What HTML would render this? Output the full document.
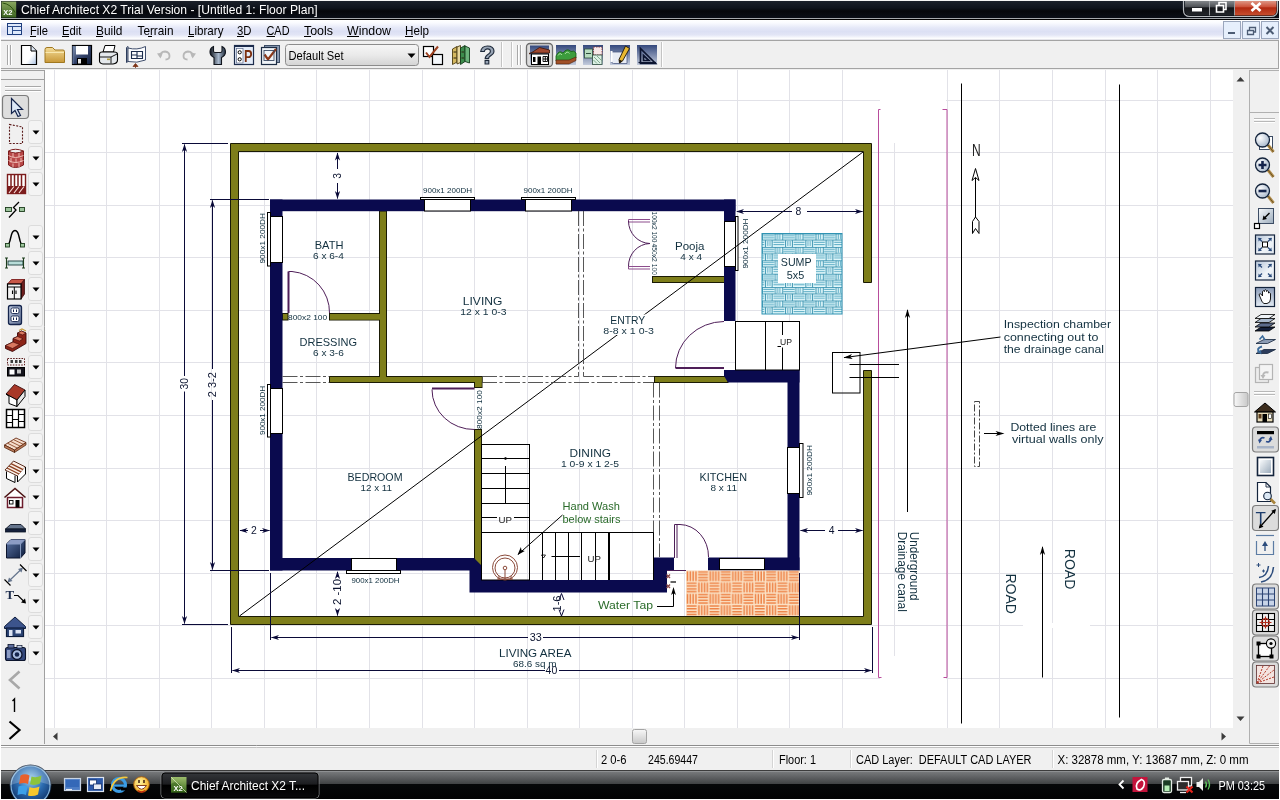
<!DOCTYPE html>
<html lang="en">
<head>
<meta charset="utf-8">
<title>Chief Architect X2 Trial Version - [Untitled 1: Floor Plan]</title>
<style>
*{box-sizing:border-box;margin:0;padding:0}
html,body{width:1280px;height:800px;overflow:hidden;background:#f0f0f0;font-family:"Liberation Sans",sans-serif;font-size:12px;color:#000}
.abs{position:absolute}
#titlebar{left:0;top:0;width:1280px;height:20px;background:linear-gradient(#1c222c 0,#0e131c 40%,#05070b 55%,#0a0e16 88%,#0a0e16 89%,#a4a8ac 90%,#a4a8ac 95%,#000 95%,#000 100%)}
#frame{left:0;top:0;width:1280px;height:800px;border:1px solid #fff;border-top-color:#f4f4f4;z-index:50;pointer-events:none}
#titlebar .t{left:21px;top:2px;color:#fff;font-size:12.5px;white-space:nowrap;letter-spacing:0}
#menubar{left:0;top:20px;width:1280px;height:20px;background:linear-gradient(#fff 0,#fafbff 15%,#e6e9f8 40%,#dce0f4 60%,#e2e5f6 78%,#f6f7fc 92%,#fff 100%);border-bottom:1px solid #e4e4ea}
#menubar span{position:absolute;top:3px;font-size:12.5px;white-space:nowrap;color:#000}
#menubar u{text-decoration:underline}
#toolbar{left:0;top:41px;width:1280px;height:28px;background:#f0f0f0}
#lefttb{left:0;top:70px;width:45px;height:675px;background:#f0f0f0}
#righttb{left:1250px;top:70px;width:30px;height:675px;background:#f0f0f0}
#canvas{left:45px;top:70px;width:1188px;height:658px;background:#fff;overflow:hidden}
#vscroll{left:1233px;top:70px;width:17px;height:658px;background:#f0f0f0}
#hscroll{left:45px;top:728px;width:1205px;height:17px;background:#f0f0f0}
#status{left:0;top:745px;width:1280px;height:25px;background:#f0f0f0}
#status span{position:absolute;top:7px;font-size:12.5px;white-space:nowrap}
#taskbar{left:0;top:770px;width:1280px;height:30px;background:linear-gradient(#3c3c3c 0,#3c3c3c 1px,#8e9092 1px,#8e9092 2px,#76787a 2px,#3e4042 14.5px,#060709 14.5px,#020203 29px,#fff 29px)}
svg{will-change:transform}
svg text{font-family:"Liberation Sans",sans-serif}
</style>
</head>
<body>
<div id="titlebar" class="abs"><svg class="abs" style="left:0;top:0" width="1280" height="20" viewBox="0 0 1280 20">
<defs><linearGradient id="gx" x1="0" y1="0" x2="0" y2="1"><stop offset="0" stop-color="#8aa860"/><stop offset="1" stop-color="#3c6420"/></linearGradient>
<linearGradient id="gb" x1="0" y1="0" x2="0" y2="1"><stop offset="0" stop-color="#8c9094"/><stop offset=".45" stop-color="#4c4f54"/><stop offset=".5" stop-color="#14161a"/><stop offset="1" stop-color="#23262b"/></linearGradient>
<linearGradient id="gr" x1="0" y1="0" x2="0" y2="1"><stop offset="0" stop-color="#e0a090"/><stop offset=".45" stop-color="#cc5038"/><stop offset=".5" stop-color="#b02810"/><stop offset="1" stop-color="#c85030"/></linearGradient></defs>
<rect x="1.500" y="1.500" width="14.700" height="16" fill="url(#gx)"/><path d="M2.500 3Q11 4 15 12.500" fill="none" stroke="#2c5010" stroke-width="1"/>
<text x="3.300" y="14.800" font-family="Liberation Sans, sans-serif" font-size="7.500" font-weight="bold" fill="#fff">X2</text>
<path d="M1183.500 0V10Q1183.500 16.500 1190 16.500H1271Q1277.500 16.500 1277.500 10V0" fill="none" stroke="#b8bcc0" stroke-width="1.200"/>
<path d="M1185 0H1209V15.500H1190Q1185 15.500 1185 10Z" fill="url(#gb)"/>
<rect x="1210" y="0" width="24" height="15.500" fill="url(#gb)"/>
<path d="M1235 0H1276.500V10Q1276.500 15.500 1271 15.500H1235Z" fill="url(#gr)"/>
<path d="M1209.500 0V15.500M1234.500 0V15.500" stroke="#9a9ea2" stroke-width="1"/>
<rect x="1192" y="8" width="10" height="3.500" fill="#fff"/>
<path d="M1216.500 5.500H1223.500V12H1216.500Z M1219 5V2.500H1226V9.500H1224" fill="none" stroke="#fff" stroke-width="1.600"/>
<path d="M1251.500 3L1260.500 11M1260.500 3L1251.500 11" stroke="#fff" stroke-width="2.800" fill="none"/>
</svg>
<svg class="abs" style="left:0;top:0" width="400" height="20"><text x="21" y="14.2" font-size="12.6" fill="#fff" textLength="296.5" lengthAdjust="spacingAndGlyphs" style="font-family:'Liberation Sans',sans-serif">Chief Architect X2 Trial Version - [Untitled 1: Floor Plan]</text></svg></div>
<div id="menubar" class="abs"><svg class="abs" style="left:0;top:0" width="1280" height="20" viewBox="0 20 1280 20" font-family="Liberation Sans, sans-serif" font-size="13" fill="#000">
<g fill="none" stroke="#1c3c7c" stroke-width="1"><rect x="7.5" y="23.5" width="14" height="11" fill="#dfeafc"/><path d="M7.500 26.500H21.500M12.500 26.500V34.500M12.500 30.500H21.500" stroke="#2c4c8c"/></g>
<text x="30" y="34.500" textLength="18" lengthAdjust="spacingAndGlyphs">File</text>
<text x="62" y="34.500" textLength="19.500" lengthAdjust="spacingAndGlyphs">Edit</text>
<text x="96" y="34.500" textLength="26.500" lengthAdjust="spacingAndGlyphs">Build</text>
<text x="137.500" y="34.500" textLength="36" lengthAdjust="spacingAndGlyphs">Terrain</text>
<text x="188" y="34.500" textLength="35.500" lengthAdjust="spacingAndGlyphs">Library</text>
<text x="237" y="34.500" textLength="14.500" lengthAdjust="spacingAndGlyphs">3D</text>
<text x="266.500" y="34.500" textLength="23" lengthAdjust="spacingAndGlyphs">CAD</text>
<text x="304" y="34.500" textLength="29" lengthAdjust="spacingAndGlyphs">Tools</text>
<text x="347" y="34.500" textLength="44" lengthAdjust="spacingAndGlyphs">Window</text>
<text x="405" y="34.500" textLength="24" lengthAdjust="spacingAndGlyphs">Help</text>
<path d="M30 36.500H36M62 36.500H69M96 36.500H103M148 36.500H152M188 36.500H194M237 36.500H244M266.500 36.500H275M304 36.500H311M347 36.500H359M405 36.500H413" stroke="#000" stroke-width="1" fill="none"/>
<g fill="#e6effc" stroke="#9aa6bc" stroke-width="1"><rect x="1223.500" y="21.500" width="17" height="17"/><rect x="1242.500" y="21.500" width="17" height="17"/><rect x="1261.500" y="21.500" width="17" height="17"/></g>
<g fill="none" stroke="#4c5c74" stroke-width="1.600"><path d="M1228 33H1235" stroke-width="2"/><path d="M1247.500 30.500H1253.500V34.500H1247.500Z M1249.500 30V27.500H1255.500V32H1254" stroke-width="1.300"/><path d="M1266.500 27L1273.500 34M1273.500 27L1266.500 34" stroke-width="2"/></g>
</svg>
</div>
<div id="toolbar" class="abs"><svg class="abs" style="left:0;top:-1px" width="1280" height="30" viewBox="0 40 1280 30" font-family="Liberation Sans, sans-serif">
<defs>
<linearGradient id="tg1" x1="0" y1="0" x2="0" y2="1"><stop offset="0" stop-color="#34487c"/><stop offset="1" stop-color="#c4ccdc"/></linearGradient>
<linearGradient id="tfold" x1="0" y1="0" x2="0" y2="1"><stop offset="0" stop-color="#f4dc98"/><stop offset="1" stop-color="#c89838"/></linearGradient>
<linearGradient id="tdoc" x1="0" y1="0" x2="1" y2="1"><stop offset="0" stop-color="#fff"/><stop offset=".6" stop-color="#fff"/><stop offset="1" stop-color="#a8c0e0"/></linearGradient>
<linearGradient id="tdd" x1="0" y1="0" x2="0" y2="1"><stop offset="0" stop-color="#f6f6f6"/><stop offset=".5" stop-color="#eaeaea"/><stop offset="1" stop-color="#d4d4d4"/></linearGradient>
<linearGradient id="tflop" x1="0" y1="0" x2="1" y2="1"><stop offset="0" stop-color="#8c9cb4"/><stop offset=".5" stop-color="#34446c"/><stop offset="1" stop-color="#14203c"/></linearGradient><linearGradient id="tmet" x1="0" y1="0" x2="1" y2="0"><stop offset="0" stop-color="#10141c"/><stop offset=".55" stop-color="#a8b8cc"/><stop offset="1" stop-color="#1c2838"/></linearGradient>
</defs>
<rect x="0.500" y="40.500" width="1278" height="28" fill="#f0f0f0" stroke="#a4a4a4"/>
<path d="M7.500 45V65M10.500 45V65" stroke="#a8a8a8" stroke-width="1" fill="none"/><path d="M8.500 45V65M11.500 45V65" stroke="#fff" stroke-width="1" fill="none"/>
<!-- new -->
<path d="M21.500 45.500H31L36.500 51V64.500H21.500Z" fill="url(#tdoc)" stroke="#000" stroke-width="1.200"/><path d="M31 45.500V51H36.500" fill="#dfe8f4" stroke="#000" stroke-width="1"/>
<!-- open -->
<path d="M45 49.500Q45 47.500 47 47.500H52.500L55 50H63Q64.500 50 64.500 51.500V62.500H45Z" fill="url(#tfold)" stroke="#a07820" stroke-width="1"/><path d="M45.500 52.500H64" stroke="#f8e8b0" stroke-width="1"/>
<!-- save -->
<rect x="72.500" y="45.500" width="19" height="19" fill="url(#tflop)" stroke="#000" stroke-width="1.200"/><rect x="76" y="46" width="12" height="8.500" fill="#fff"/><rect x="77" y="58" width="10" height="6.500" fill="#000"/><rect x="78" y="59" width="3" height="4.500" fill="#e8e8e8"/><path d="M73 46V64" stroke="#6c84b4" stroke-width="1"/>
<!-- print -->
<path d="M103 52L105 45.500H115L113.500 52Z" fill="#fff" stroke="#000" stroke-width="1"/><path d="M99.500 54Q99.500 52 102 52H114Q117.500 52 117.500 54V60Q117.500 63.500 113 64H103Q99.500 63.500 99.500 61Z" fill="#e4e8ec" stroke="#000" stroke-width="1.100"/><path d="M100 57H111V63.500M111 57L117 54" fill="none" stroke="#000" stroke-width=".9"/><rect x="107" y="58.500" width="3" height="1.600" fill="#b09c40"/>
<!-- plan -->
<path d="M126.500 47.500L128 46.500V61.500L126.500 62.500Z" fill="#fff" stroke="#2c3c5c"/><path d="M128 48Q137 50.500 145.500 46.500V60Q137 63.500 128 61.500Z" fill="#fbfcfe" stroke="#2c3c5c" stroke-width=".9"/><path d="M131.500 51.500H142.500V58.500H131.500ZM131.500 55H137M137 51.500V58.500M137 56H142.500" fill="none" stroke="#1c2c4c" stroke-width="1.100"/><path d="M135.500 63.500L133 66.500H138Z M135.500 66V68" fill="#7c3418" stroke="#7c3418" stroke-width=".8"/>
<!-- undo redo -->
<path d="M160.500 56.500Q160 51.500 165 51.500Q169.500 52 169.500 56Q169.500 59.500 165.500 59.500" fill="none" stroke="#b8b8b8" stroke-width="1.800"/><path d="M157 53.500L163 52.500L160.500 58.500Z" fill="#b8b8b8"/>
<path d="M192.500 56.500Q193 51.500 188 51.500Q183.500 52 183.500 56Q183.500 59.500 187.500 59.500" fill="none" stroke="#b8b8b8" stroke-width="1.800"/><path d="M196 53.500L190 52.500L192.500 58.500Z" fill="#b8b8b8"/>
<!-- wrench -->
<path d="M213.500 46.500V51Q213.500 52.500 215 52.500H220.500Q222 52.500 222 51V46.500Q225.500 48 225.500 52Q225.500 55.500 221.500 57.500V64.500H214V57.500Q210 55.500 210 52Q210 48 213.500 46.500Z" fill="url(#tmet)" stroke="#10141c" stroke-width="1.100"/>
<!-- P -->
<rect x="234.500" y="45.500" width="19" height="19" fill="#e4ecf8" stroke="#1c2c4c" stroke-width="1.200"/><path d="M235 46.200H253" stroke="#1c2c4c" stroke-width="1.600"/><rect x="236.500" y="48.500" width="6.500" height="14.500" fill="#fff" stroke="#5c6c8c" stroke-width=".7"/><circle cx="239.700" cy="52.300" r="1.600" fill="none" stroke="#000" stroke-width="1"/><circle cx="239.700" cy="59.300" r="1.600" fill="none" stroke="#000" stroke-width="1"/><text x="244" y="61.700" font-size="17" font-weight="bold" fill="#7c3010" textLength="8.500" lengthAdjust="spacingAndGlyphs">P</text>
<!-- checkbox -->
<rect x="264.500" y="45.500" width="15" height="17" fill="#8c9cb4" stroke="#3c4c64"/><rect x="261.500" y="47.500" width="15" height="17" fill="#f0f4f8" stroke="#1c2c44" stroke-width="1.200"/><path d="M264.500 54.500L268 59.500L276 49" fill="none" stroke="#8c3818" stroke-width="2.200"/><rect x="264" y="50.500" width="10" height="10" fill="none" stroke="#3c4c64" stroke-width=".9"/>
<!-- dropdown -->
<rect x="285.500" y="44.500" width="133" height="21" rx="3" fill="url(#tdd)" stroke="#8c8c8c"/><text x="288.500" y="59.500" font-size="12.500" fill="#000" textLength="55" lengthAdjust="spacingAndGlyphs">Default Set</text><path d="M407.500 53.500H415.500L411.500 58Z" fill="#000"/>
<!-- checks -->
<rect x="423.500" y="46.500" width="10" height="10" fill="#fff" stroke="#000" stroke-width="1.200"/><rect x="432.500" y="54.500" width="10" height="10" fill="#f4f8fc" stroke="#000" stroke-width="1.200"/><path d="M426 52.500L429.500 57L438 46.500" fill="none" stroke="#9c4020" stroke-width="2"/>
<!-- books -->
<path d="M452.500 49L457 46.500V62L452.500 64.500Z" fill="#d4b860" stroke="#4c3c10" stroke-width=".9"/><path d="M457 47L460.500 45.500V62.500L457 64Z" fill="#e8d8a0" stroke="#4c3c10" stroke-width=".9"/><path d="M460.500 48L465 45.500V61.500L460.500 64.500Z" fill="#3c8c4c" stroke="#143c1c" stroke-width=".9"/><path d="M465 46L469.500 48V63L465 61.500Z" fill="#6cb47c" stroke="#143c1c" stroke-width=".9"/><path d="M453.500 52H456.500M453.500 58H456.500M461.500 52H464M461.500 58H464" stroke="#2c2410" stroke-width="1.200"/>
<!-- help -->
<text x="479.500" y="64" font-size="25" font-weight="bold" fill="#98a4b4" stroke="#1c2838" stroke-width="1.100" textLength="16" lengthAdjust="spacingAndGlyphs">?</text>
<path d="M501.500 42V67M511.500 42V67M661.500 42V67" stroke="#c4c4c4" stroke-width="1" fill="none"/><path d="M502.500 42V67M512.500 42V67M662.500 42V67" stroke="#fff" stroke-width="1" fill="none"/>
<path d="M517.500 45V65M520.500 45V65" stroke="#a8a8a8" stroke-width="1" fill="none"/><path d="M518.500 45V65M521.500 45V65" stroke="#fff" stroke-width="1" fill="none"/>
<!-- house (selected) -->
<rect x="526.500" y="43.500" width="26" height="23" rx="3.500" fill="#dcdcdc" stroke="#6c6c6c" stroke-width="1.300"/>
<rect x="530" y="45.500" width="19" height="19" fill="url(#tg1)"/><path d="M529.500 54L539.500 47.500L549.500 50V53H529.500Z" fill="#a04830" stroke="#3c1408" stroke-width=".8"/><rect x="531.500" y="54" width="17" height="10.500" fill="#fff" stroke="#000" stroke-width="1"/><rect x="537.500" y="56.500" width="3.500" height="8" fill="#000"/><rect x="533" y="57" width="2.500" height="5" fill="#000"/><path d="M543 56.500H547.500V61.500H543ZM545.300 56.500V61.500M543 59H547.500" fill="none" stroke="#000" stroke-width=".9"/>
<!-- terrain -->
<rect x="556" y="45" width="20" height="20" fill="url(#tg1)"/><path d="M556 56Q559 49.500 563 53Q567 47.500 571 51.500Q574 50 576 53V58L570 61H556Z" fill="#3c9c3c" stroke="#145c14" stroke-width=".8"/><path d="M556 60H569L576 57V60.500L569 64H556Z" fill="#a05028" stroke="#4c2008" stroke-width=".6"/><path d="M558 55.500Q560 52 562 55M565 54Q567 50.500 569.500 53.500" stroke="#a8e0a0" stroke-width="1" fill="none"/>
<!-- plan -->
<rect x="583" y="45" width="20" height="20" fill="url(#tg1)"/><rect x="584.500" y="49" width="8" height="9" fill="#b8dcc0" stroke="#2c4c3c" stroke-width=".8"/><rect x="593.500" y="47" width="8.500" height="8" fill="#f8e8e8" stroke="#7c2c2c" stroke-width=".8" stroke-dasharray="1.500 1"/><rect x="592.500" y="55" width="9.500" height="9.500" fill="#dcf0e4" stroke="#2c4c3c" stroke-width=".8"/><path d="M594 57L600 63M597 56L601.500 60.500M593.500 60L597 63.500" stroke="#5c8c6c" stroke-width=".7"/><path d="M586 53.500H591" stroke="#2c4c3c" stroke-width="1"/>
<!-- pencil -->
<rect x="610" y="45" width="20" height="20" fill="url(#tg1)"/><path d="M611.500 52H627V63.500H613.500Q611.500 63.500 611.500 61Z" fill="#e8ecf4" stroke="#4c5c84" stroke-width=".8"/><path d="M611.500 51V62" stroke="#fff" stroke-width="2"/><path d="M625.500 46L629.500 48.500L622.500 61L619.500 63L619 59.500Z" fill="#e8b830" stroke="#1c1408" stroke-width=".9"/><path d="M619 59.500L622.500 61L619.500 63Z" fill="#1c1408"/>
<!-- triangle -->
<rect x="637" y="45" width="20" height="20" fill="url(#tg1)"/><path d="M640.500 48.500V63.500H655.500Z M643.500 55.500V60.500H649Z" fill="none" stroke="#0c1430" stroke-width="1.700"/><path d="M638.500 62.500H656" stroke="#0c1430" stroke-width="1.200"/>
</svg>
</div>
<div id="lefttb" class="abs"><svg class="abs" style="left:0;top:0" width="45" height="675" viewBox="0 70 45 675" font-family="Liberation Sans, sans-serif">
<defs><linearGradient id="lb" x1="0" y1="0" x2="1" y2="1"><stop offset="0" stop-color="#5c74a4"/><stop offset="1" stop-color="#0c1c3c"/></linearGradient><linearGradient id="lo" x1="0" y1="0" x2="1" y2="1"><stop offset="0" stop-color="#c4d0e4"/><stop offset="1" stop-color="#5c6c90"/></linearGradient></defs>
<path d="M0 70.500H45M44.500 70V745M0.500 70V745M0 79.500H45" stroke="#a0a0a0" fill="none"/>
<path d="M5 86.500H41M5 90.500H41" stroke="#a8a8a8" fill="none"/><path d="M5 87.500H41M5 91.500H41" stroke="#fff" fill="none"/>
<rect x="28.500" y="120.5" width="14" height="23" rx="2.500" fill="#f4f4f4" stroke="#dcdcdc"/><path d="M32.500 130.5H39.500L36 134.5Z" fill="#000"/>
<rect x="28.500" y="146.5" width="14" height="23" rx="2.500" fill="#f4f4f4" stroke="#dcdcdc"/><path d="M32.500 156.5H39.500L36 160.5Z" fill="#000"/>
<rect x="28.500" y="172.5" width="14" height="23" rx="2.500" fill="#f4f4f4" stroke="#dcdcdc"/><path d="M32.500 182.5H39.500L36 186.5Z" fill="#000"/>
<rect x="28.500" y="225.5" width="14" height="23" rx="2.500" fill="#f4f4f4" stroke="#dcdcdc"/><path d="M32.500 235.5H39.500L36 239.5Z" fill="#000"/>
<rect x="28.500" y="251.5" width="14" height="23" rx="2.500" fill="#f4f4f4" stroke="#dcdcdc"/><path d="M32.500 261.5H39.500L36 265.5Z" fill="#000"/>
<rect x="28.500" y="277.5" width="14" height="23" rx="2.500" fill="#f4f4f4" stroke="#dcdcdc"/><path d="M32.500 287.5H39.500L36 291.5Z" fill="#000"/>
<rect x="28.500" y="303.5" width="14" height="23" rx="2.500" fill="#f4f4f4" stroke="#dcdcdc"/><path d="M32.500 313.5H39.500L36 317.5Z" fill="#000"/>
<rect x="28.500" y="329.5" width="14" height="23" rx="2.500" fill="#f4f4f4" stroke="#dcdcdc"/><path d="M32.500 339.5H39.500L36 343.5Z" fill="#000"/>
<rect x="28.500" y="355.5" width="14" height="23" rx="2.500" fill="#f4f4f4" stroke="#dcdcdc"/><path d="M32.500 365.5H39.500L36 369.5Z" fill="#000"/>
<rect x="28.500" y="381.5" width="14" height="23" rx="2.500" fill="#f4f4f4" stroke="#dcdcdc"/><path d="M32.500 391.5H39.500L36 395.5Z" fill="#000"/>
<rect x="28.500" y="407.5" width="14" height="23" rx="2.500" fill="#f4f4f4" stroke="#dcdcdc"/><path d="M32.500 417.5H39.500L36 421.5Z" fill="#000"/>
<rect x="28.500" y="433.5" width="14" height="23" rx="2.500" fill="#f4f4f4" stroke="#dcdcdc"/><path d="M32.500 443.5H39.500L36 447.5Z" fill="#000"/>
<rect x="28.500" y="459.5" width="14" height="23" rx="2.500" fill="#f4f4f4" stroke="#dcdcdc"/><path d="M32.500 469.5H39.500L36 473.5Z" fill="#000"/>
<rect x="28.500" y="485.5" width="14" height="23" rx="2.500" fill="#f4f4f4" stroke="#dcdcdc"/><path d="M32.500 495.5H39.500L36 499.5Z" fill="#000"/>
<rect x="28.500" y="511.5" width="14" height="23" rx="2.500" fill="#f4f4f4" stroke="#dcdcdc"/><path d="M32.500 521.5H39.500L36 525.5Z" fill="#000"/>
<rect x="28.500" y="537.5" width="14" height="23" rx="2.500" fill="#f4f4f4" stroke="#dcdcdc"/><path d="M32.500 547.5H39.500L36 551.5Z" fill="#000"/>
<rect x="28.500" y="563.5" width="14" height="23" rx="2.500" fill="#f4f4f4" stroke="#dcdcdc"/><path d="M32.500 573.5H39.500L36 577.5Z" fill="#000"/>
<rect x="28.500" y="589.5" width="14" height="23" rx="2.500" fill="#f4f4f4" stroke="#dcdcdc"/><path d="M32.500 599.5H39.500L36 603.5Z" fill="#000"/>
<rect x="28.500" y="615.5" width="14" height="23" rx="2.500" fill="#f4f4f4" stroke="#dcdcdc"/><path d="M32.500 625.5H39.500L36 629.5Z" fill="#000"/>
<rect x="28.500" y="641.5" width="14" height="23" rx="2.500" fill="#f4f4f4" stroke="#dcdcdc"/><path d="M32.500 651.5H39.500L36 655.5Z" fill="#000"/>
<rect x="2.500" y="95.500" width="26" height="23" rx="3.500" fill="#dedede" stroke="#7c7c7c" stroke-width="1.200"/><path d="M11.500 98.500V113.500L15 110.500L18 116.500L20.500 115.500L17.500 109.500H22.500Z" fill="#dce8f8" stroke="#14244c" stroke-width="1.200"/>
<path d="M9.500 124.500L22.500 127V143.500H9.500Z" fill="none" stroke="#5c1c1c" stroke-width="1.100" stroke-dasharray="2 1.400"/>
<path d="M8.500 151Q15 155 23.500 151V165Q15 170 8.500 165Z" fill="#b84848" stroke="#7c1c1c" stroke-width="1"/><path d="M8.500 155.500Q15 159.500 23.500 155.500M8.500 160.500Q15 164.500 23.500 160.500M13 153V157M19 153V157M11 158V162.500M16 158.500V163M21 158V162M13 163.500V167M19 163V167" stroke="#f4c8c0" stroke-width=".9" fill="none"/><path d="M8.500 151Q15 147.500 23.500 151" stroke="#7c1c1c" fill="none"/>
<rect x="7.500" y="174.500" width="18" height="19" fill="#fff" stroke="#7c1c1c" stroke-width="1.400"/><path d="M11 175V186M14.500 175V186M18 175V186M21.500 175V186" stroke="#7c1c1c" stroke-width="1.500"/><rect x="7.500" y="186" width="18" height="7.500" fill="#7c1c1c"/><path d="M9 193L14 186.500M14 193L19 186.500M19 193L24 186.500" stroke="#f8dcd8" stroke-width="1.200"/>
<rect x="5.500" y="207.500" width="6" height="4" fill="#9cc49c" stroke="#1c3c1c" stroke-width=".9"/><rect x="19.500" y="207.500" width="5" height="4" fill="#9cc49c" stroke="#1c3c1c" stroke-width=".9"/><path d="M9 217.500L16 210L13.500 207.500L19 202" fill="none" stroke="#000" stroke-width="1.300"/>
<path d="M7.500 244.500C11.500 244.500 9.500 230.500 15 230.500C20.500 230.500 18.500 244.500 22.500 244.500" fill="none" stroke="#000" stroke-width="1.500"/><rect x="5.500" y="243.500" width="4" height="3.500" fill="#9cc49c" stroke="#1c3c1c" stroke-width=".9"/><rect x="20.500" y="243.500" width="4" height="3.500" fill="#9cc49c" stroke="#1c3c1c" stroke-width=".9"/>
<rect x="8" y="261" width="15" height="4" fill="#b8dcd8" stroke="#1c3c3c" stroke-width=".9"/><path d="M6.500 258V268M23.500 258V268M5 258H8M5 268H8M22 258H25M22 268H25" stroke="#1c3c1c" stroke-width="1.100" fill="none"/>
<path d="M7.500 284L11.500 279.500H24.500L21 284Z" fill="#c85848" stroke="#7c1c1c" stroke-width=".9"/><path d="M21 284L24.500 279.500V294L21 299Z" fill="#6c1c1c" stroke="#3c0c0c" stroke-width=".8"/><rect x="7.500" y="284" width="13.500" height="15" fill="#f4f4f4" stroke="#000" stroke-width="1.200"/><path d="M14.300 287V299M7.500 287H21" stroke="#000" stroke-width="1"/><path d="M12.500 290.500V294M16 290.500V294" stroke="#000" stroke-width="1.100"/>
<rect x="8.500" y="305.500" width="13" height="19" rx="2" fill="url(#lo)" stroke="#14244c" stroke-width="1.300"/><rect x="11" y="308" width="8" height="5.500" rx="1.500" fill="#fff" stroke="#14244c" stroke-width=".9"/><rect x="11" y="316" width="8" height="5.500" rx="1.500" fill="#fff" stroke="#14244c" stroke-width=".9"/><path d="M13.500 309.500V312M16.500 309.500V312M13.500 317.500V320M16.500 317.500V320" stroke="#14244c" stroke-width="1"/>
<path d="M5.500 345.500L13 342V338.500L17.500 336.500V333L21.500 331L26 333V343.500L12.500 351.500L5.500 348.500Z" fill="#8c2418" stroke="#3c0808" stroke-width=".9"/><path d="M5.500 345.500L13 342L19.500 344.500L12.500 348.500ZM13 338.500L17.500 336.500L23 338.800L19.500 341ZM17.500 333L21.500 331L26 333L22.500 335Z" fill="#d87860" stroke="#3c0808" stroke-width=".6"/><path d="M19 330.500L22 329L26 331" stroke="#c8a040" stroke-width="1.300" fill="none"/>
<rect x="7.500" y="358.500" width="17" height="6.500" fill="none" stroke="#5c1c1c" stroke-width="1" stroke-dasharray="1.600 1.200"/><rect x="10.500" y="360" width="2.500" height="3" fill="#3c3c3c"/><rect x="15" y="360" width="2.500" height="3" fill="#3c3c3c"/><rect x="19" y="360" width="2.500" height="3" fill="#3c3c3c"/><rect x="7.500" y="367.500" width="17" height="8.500" fill="#14141c" stroke="#000"/><rect x="9.500" y="369.500" width="5" height="5" fill="#fff"/><rect x="17" y="369.500" width="4" height="4" fill="#c8c8c8"/>
<path d="M6 394L14.500 384.500L25 390L17 400Z" fill="#a83828" stroke="#3c0c0c" stroke-width=".9"/><path d="M6 394L9 396V403.500L17 406.500V400Z" fill="#fff" stroke="#000" stroke-width="1"/><path d="M17 400L25 390V396.500L17 406.500Z" fill="#e8e8e8" stroke="#000" stroke-width="1"/>
<rect x="6.500" y="409.500" width="18" height="18" fill="#fff" stroke="#000" stroke-width="1.500"/><path d="M12.500 409.500V427.500M18.500 409.500V427.500M6.500 415.500H12.500M12.500 419.500H18.500M18.500 414.500H24.500M18.500 421.500H24.500M6.500 422.500H12.500" stroke="#000" stroke-width="1.200" fill="none"/>
<path d="M4.500 445L16 438L26 442.500L14.500 450Z" fill="#f4dccc" stroke="#6c3018" stroke-width=".9"/><path d="M4.500 445V447.500L14.500 452.500V450ZM14.500 450V452.500L26 445V442.500Z" fill="#b87858" stroke="#4c2008" stroke-width=".7"/><path d="M7.500 443.200L17.500 448.200M10.500 441.400L20.500 446.300M13.500 439.600L23.300 444.300" stroke="#8c4828" stroke-width=".9"/>
<path d="M5 470L13.500 461L25.500 467L17.500 476Z" fill="#fbeee6" stroke="#4c1c0c" stroke-width=".9"/><path d="M7 468L19 474M9 465.800L21 471.800M11 463.600L23 469.600" stroke="#8c4020" stroke-width="1.300"/><path d="M6.500 471.500V478.500L15 482.500V475.500M17.500 476V482L25.500 474V467" fill="#fff" stroke="#000" stroke-width="1"/>
<path d="M4.500 497.500L15 488.500L25.500 497.500" fill="#fff" stroke="#4c1414" stroke-width="1.600"/><path d="M7 497H23" stroke="#fff" stroke-width="2"/><rect x="7.500" y="497.500" width="15" height="10" fill="#fff" stroke="#6c1c2c" stroke-width="1.500"/><rect x="15.500" y="500" width="4" height="7.500" fill="#000"/><rect x="9.500" y="500.500" width="3.500" height="3.500" fill="#fff" stroke="#000" stroke-width=".9"/>
<path d="M5.500 529L10.500 524.500H21L25.500 529Z" fill="#64748c" stroke="#0c1424" stroke-width=".9"/><rect x="5.500" y="529" width="20" height="3" fill="#14203c" stroke="#0c1424" stroke-width=".8"/>
<path d="M6.500 544L11 539.500H25V553L20.500 558H6.500Z" fill="url(#lb)" stroke="#0c142c" stroke-width="1"/><path d="M6.500 544H20.500V558M20.500 544L25 539.500" fill="none" stroke="#9cb0d4" stroke-width=".8"/><path d="M6.500 544L11 539.500H25L20.500 544Z" fill="#8c9cc4"/>
<path d="M9 581L21.500 569" stroke="#64748c" stroke-width="1.200"/><path d="M7.500 582.500L9 577.500L12.500 581Z M23 567.500L21.500 572.500L18 569Z" fill="#64748c"/><path d="M4.500 579.500L10.500 585.500M20 564.500L26.500 571" stroke="#000" stroke-width="1.200"/>
<text x="5.500" y="598.500" font-size="13" font-weight="bold" style="font-family:'Liberation Serif',serif" fill="#1c2c4c">T</text><path d="M14 595.500H18L24.500 602" fill="none" stroke="#000" stroke-width="1.200"/><path d="M26 603.500L21 602.500L25 598.500Z" fill="#000"/>
<path d="M4.500 626.500L15 617L25.500 626.500V628.500H4.500Z" fill="#3c548c" stroke="#0c1c3c" stroke-width="1"/><rect x="6.500" y="628" width="17" height="8.500" fill="#2c4474" stroke="#0c1c3c" stroke-width="1.200"/><rect x="9" y="630" width="3.500" height="6" fill="#dce4f4"/><rect x="15.500" y="630" width="5.500" height="3.500" fill="#dce4f4"/>
<rect x="5.500" y="647.500" width="20" height="13" rx="2" fill="#34487c" stroke="#0c142c" stroke-width="1.100"/><rect x="8" y="644.500" width="6" height="3.500" fill="#5c6c9c" stroke="#0c142c" stroke-width=".8"/><rect x="17" y="645.500" width="5" height="2.500" fill="#c8d4ec" stroke="#0c142c" stroke-width=".7"/><circle cx="17" cy="654.500" r="5" fill="#a8bce0" stroke="#0c142c" stroke-width="1.300"/><circle cx="17" cy="654.500" r="2.300" fill="#14244c"/><rect x="7" y="650" width="3.500" height="8" fill="#8c9cc4"/>
<path d="M19.500 671.500L10 680L19.500 688.500" fill="none" stroke="#a8a8a8" stroke-width="2.600"/>
<path d="M12.500 701L14.500 699V712" fill="none" stroke="#000" stroke-width="1.400"/>
<path d="M9.500 721.500L19.500 730L9.500 739" fill="none" stroke="#000" stroke-width="2.200"/>
</svg>
</div>
<div id="canvas" class="abs">
<svg id="plan" class="abs" style="left:-45px;top:-70px" width="1280" height="800" viewBox="0 0 1280 800">
<path d="M54.5 70V728M106.5 70V728M159.5 70V728M211.5 70V728M264.5 70V728M316.5 70V728M369.5 70V728M422.5 70V728M474.5 70V728M527.5 70V728M579.5 70V728M632.5 70V728M684.5 70V728M737.5 70V728M789.5 70V728M842.5 70V728M894.5 70V728M947.5 70V728M999.5 70V728M1052.5 70V728M1105.5 70V728M1157.5 70V728M1210.5 70V728M45 100.5H1233M45 152.5H1233M45 205.5H1233M45 257.5H1233M45 310.5H1233M45 362.5H1233M45 415.5H1233M45 468.5H1233M45 520.5H1233M45 573.5H1233M45 625.5H1233M45 678.5H1233" stroke="#e2e2e8" stroke-width="1" fill="none"/>
<defs>
<pattern id="sump" x="762" y="233.5" width="20.25" height="13.4" patternUnits="userSpaceOnUse"><rect width="20.25" height="13.4" fill="#e6fafc"/><path d="M1.20 2.23H12.30M1.20 4.47H12.30M15.75 1.00V5.70M18.00 1.00V5.70M11.32 8.93H22.43M11.32 11.17H22.43M-8.93 8.93H2.17M-8.93 11.17H2.17M5.62 7.70V12.40M7.88 7.70V12.40" stroke="#3a98b6" stroke-width="0.85" fill="none"/><path d="M0 0.4H20.25M0 6.70H20.25M13.50 0V6.70M0.4 0V6.70M10.12 6.70V13.4M3.38 6.70V13.4" stroke="#2a88a8" stroke-width="0.9" fill="none"/></pattern>
<pattern id="brick" x="686" y="570.5" width="22.7" height="22.7" patternUnits="userSpaceOnUse"><rect width="22.7" height="22.7" fill="#fbe2c6"/><path d="M1.50 0.80V10.55M4.30 0.80V10.55M7.10 0.80V10.55M9.90 0.80V10.55M12.15 1.50H21.90M12.15 4.30H21.90M12.15 7.10H21.90M12.15 9.90H21.90M0.80 12.85H10.55M0.80 15.65H10.55M0.80 18.45H10.55M0.80 21.25H10.55M12.85 12.15V21.90M15.65 12.15V21.90M18.45 12.15V21.90M21.25 12.15V21.90" stroke="#ee8448" stroke-width="1.5" fill="none"/></pattern>
<marker id="ah" viewBox="0 0 10 10" refX="9" refY="5" markerWidth="9" markerHeight="7" orient="auto-start-reverse"><path d="M0 1.5L10 5L0 8.5L2.5 5Z" fill="#00004a"/></marker>
<marker id="ahk" viewBox="0 0 10 10" refX="9" refY="5" markerWidth="10" markerHeight="7" orient="auto-start-reverse"><path d="M0 1.5L10 5L0 8.5L2.5 5Z" fill="#000"/></marker>
</defs>

<!-- olive outer boundary walls -->
<path d="M230.500 143.500H871.500V282.500H863.500V151.500H238.500V616.500H863.500V370.500H871.500V624.500H230.500Z" fill="#7e7e1a" stroke="#1a1a04" stroke-width="1"/>
<g fill="#7e7e1a" stroke="#1a1a04" stroke-width="1">
<rect x="379.500" y="211" width="7" height="171"/>
<rect x="329.500" y="313.500" width="51" height="6.500"/>
<rect x="282.500" y="313.500" width="5.500" height="6.500"/>
<rect x="329.500" y="376.500" width="152.500" height="6"/>
<rect x="474.500" y="376.500" width="7.500" height="11"/>
<rect x="474.500" y="429.500" width="7" height="136"/>
<rect x="652.500" y="276.500" width="72" height="6"/>
<rect x="654.500" y="376.500" width="73.500" height="6"/>
</g>
<g fill="#7e7e1a">
<rect x="380" y="212" width="6" height="170"/>
<rect x="330" y="314" width="51" height="5.500"/>
<rect x="330" y="377" width="151.500" height="5"/>
<rect x="475" y="377" width="6.500" height="10"/>
</g>

<!-- navy walls -->
<g fill="#0a0a4e">
<rect x="270" y="199.5" width="465.5" height="11.7"/>
<rect x="270" y="199.5" width="12.5" height="371"/>
<rect x="724" y="199.5" width="11.5" height="121.5"/>
<path d="M724 370H799.5V382.5H728L724 376Z"/>
<rect x="787.5" y="370" width="12" height="200.5"/>
<rect x="708" y="557.5" width="91.5" height="13"/>
<path d="M270 558H474L481 565V580H653V557.5H674V571H667V592.5H469.5V570.5H270Z"/>
</g>

<!-- windows -->
<g fill="#fff" stroke="#000" stroke-width="1">
<rect x="420.500" y="197.500" width="54" height="2"/><rect x="424.500" y="199.500" width="46" height="11.500"/>
<rect x="521.500" y="197.500" width="54" height="2"/><rect x="525.500" y="199.500" width="46" height="11.500"/>
<rect x="267.500" y="212.500" width="3" height="53.500"/><rect x="270.500" y="216.500" width="12" height="46"/>
<rect x="267.500" y="384.500" width="3" height="52.500"/><rect x="270.500" y="388.500" width="12" height="45"/>
<rect x="735.500" y="216.500" width="2.500" height="54"/><rect x="724.500" y="221.500" width="11" height="45"/>
<rect x="799.500" y="443.500" width="3.500" height="54"/><rect x="787.500" y="447.500" width="12" height="46"/>
<rect x="346.500" y="570.500" width="54" height="3"/><rect x="351.500" y="558.500" width="45" height="12"/>
<rect x="719.500" y="558.500" width="45" height="11"/>
</g>

<!-- diagonal -->
<line x1="863" y1="152" x2="239.5" y2="616" stroke="#000" stroke-width="1"/>

<!-- virtual walls -->
<rect x="602" y="314.500" width="54" height="20.500" fill="#fff"/>
<g fill="none" stroke="#444" stroke-width="0.9" stroke-dasharray="15 2.5 3 2.5">
<path d="M578.500 211V376.500M583.500 211V376.500H654"/>
<path d="M282.500 376.500H329.500M282.500 382.500H329.500"/>
<path d="M482 376.500H578.500M482 382.500H654"/>
<path d="M653.500 382.500V557M659.500 382.500V557"/>
</g>

<!-- sump and brick -->
<rect x="762" y="233.5" width="80" height="80.5" fill="url(#sump)" stroke="#2f93b3" stroke-width="1"/>
<rect x="778" y="254" width="38" height="29" fill="#fff"/>
<rect x="686" y="570.5" width="113.5" height="45.500" fill="url(#brick)"/>

<!-- entry steps -->
<g fill="#fff" stroke="#000" stroke-width="1">
<rect x="735.5" y="321.5" width="64" height="48.5"/>
<path d="M765.500 321.500V370M782.500 321.500V335M782.500 347.500V370M777.500 346.500H781" fill="none"/>
</g>
<!-- stairs -->
<g fill="none" stroke="#000" stroke-width="1">
<rect x="481.500" y="444.500" width="48" height="135.500"/>
<path d="M481.500 458.500H529.500M481.500 473.500H529.500M481.500 488.500H529.500M481.500 503.500H529.500M481.500 532.500H653.500M653.500 532.500V580"/>
<path d="M529.500 532.500V580M542.5 532.5V580M555.5 532.5V580M568.5 532.5V580M581.5 532.5V580M595.5 532.5V580"/>
<path d="M608.500 532.500V580M609.500 532.500V580" stroke-width="1"/>
<path d="M505.500 466V503M551.500 556.500H580M481.500 517.500H497M514 517.500H529"/><circle cx="505.500" cy="458.500" r="1" /><path d="M541.500 555L543.500 558L545.500 555Z" stroke-width=".8"/>
</g>

<!-- doors -->
<g fill="none" stroke="#4e1e58" stroke-width="1">
<path d="M288.500 313V271.500" stroke-width="2"/><path d="M288.500 271.500H292A41 41 0 0 1 329.500 313"/>
<path d="M474.500 388.500H432" stroke-width="2"/><path d="M432 389.500A42 40 0 0 0 474.500 429.500"/>
<path d="M724 368H675.500" stroke-width="2.200"/><path d="M675.500 368A49 46.500 0 0 1 724 321.500"/>
<path d="M674.500 558V524.500H677V558"/><path d="M677 524.500H680A29 32 0 0 1 708.500 557M667 570.500H686" />
<path d="M650 219.500H628.500V222H650M650 266.500H628.500V269H650" stroke="#8c4c8c"/><path d="M628.500 221A22 22.500 0 0 0 650 243.500A22 22.500 0 0 0 628.500 266.500"/>
</g>

<!-- basin and tap -->
<g fill="none" stroke="#8a4a3a" stroke-width="1">
<circle cx="505" cy="567.5" r="12.5"/><circle cx="505" cy="568" r="10"/><circle cx="505" cy="568" r="1.8"/>
<path d="M505 570V579M497 579H513M499 576V580M511 576V580"/>
</g>
<path d="M666.500 574.500l3.500 3.500M670 574.500l-3.500 3.500M666.500 584.500l3.500 3.500M670 584.500l-3.500 3.500" stroke="#8a4a4a" stroke-width="1.400"/>
<path d="M670.500 582H676" stroke="#222" stroke-width="1.400"/>
<!-- dimension lines -->
<g fill="none" stroke="#0a0a38" stroke-width="1">
<path d="M182 143.5H228M182 624.5H228M210 199.5H269M210 570.5H269"/>
<path d="M184.500 144.500V376M184.500 391.500V623.500" />
<path d="M212.5 200.5V369M212.5 400V569.5"/>
<path d="M337.5 153V169M337.5 183V198.5"/>
<path d="M737 211.5H792M807 211.5H862.5"/>
<path d="M240 530.5H248M260 530.5H269.5"/>
<path d="M800.5 530.5H825M838 530.5H862.5"/>
<path d="M337.5 572V577M337.5 611V615.5"/>
<path d="M270.5 573V640M799.5 573V640M231.5 627V673M872.5 627V673"/>
<path d="M271.5 637.5H528M543 637.5H798.5"/>
<path d="M232.5 670.500H545M559 670.500H871.500"/>
<path d="M559 600L561.500 593.500L564 600M559 609.500L561.500 616L564 609.500" stroke-width="1"/>
</g>
<g fill="#0a0a38">
<!-- arrowheads: up/down/left/right -->
<path d="M184.5 144l-2.6 8 2.6-2.2 2.6 2.2z M184.5 624l-2.6-8 2.6 2.2 2.6-2.2z"/>
<path d="M212.5 200l-2.6 8 2.6-2.2 2.6 2.2z M212.5 570l-2.6-8 2.6 2.2 2.6-2.2z"/>
<path d="M337.5 152.5l-2.6 8 2.6-2.2 2.6 2.2z M337.5 199l-2.6-8 2.6 2.2 2.6-2.2z"/>
<path d="M337.5 571l-2.6 8 2.6-2.2 2.6 2.2z M337.5 616l-2.6-8 2.6 2.2 2.6-2.2z"/>
<path d="M736 211.5l8-2.6-2.2 2.6 2.2 2.6z M863 211.5l-8-2.6 2.2 2.6-2.2 2.6z"/>
<path d="M239.5 530.5l8-2.6-2.2 2.6 2.2 2.6z M270 530.5l-8-2.6 2.2 2.6-2.2 2.6z"/>
<path d="M800 530.5l8-2.6-2.2 2.6 2.2 2.6z M863 530.5l-8-2.6 2.2 2.6-2.2 2.6z"/>
<path d="M271 637.5l8-2.6-2.2 2.6 2.2 2.6z M799 637.5l-8-2.6 2.2 2.6-2.2 2.6z"/>
<path d="M232 670.5l8-2.6-2.2 2.6 2.2 2.6z M872 670.5l-8-2.6 2.2 2.6-2.2 2.6z"/>

</g>
<g font-family="Liberation Sans, sans-serif" fill="#0c1430" font-size="10.4">
<text transform="translate(188.200 389.500) rotate(-90)" textLength="11.500" lengthAdjust="spacingAndGlyphs">30</text>
<text transform="translate(216.200 397.200) rotate(-90)" textLength="25" lengthAdjust="spacingAndGlyphs">2 3-2</text>
<text transform="translate(341.200 178.800) rotate(-90)">3</text>
<text transform="translate(341.200 605) rotate(-90)" textLength="26" lengthAdjust="spacingAndGlyphs">2 -10</text>
<text transform="translate(560.500 611.500) rotate(-90)" textLength="16" lengthAdjust="spacingAndGlyphs" font-size="10.500">1-6</text>
<text x="795.500" y="215.200">8</text>
<text x="251" y="534.300">2</text>
<text x="828.800" y="534.300">4</text>
<text x="529.700" y="641.300" textLength="12" lengthAdjust="spacingAndGlyphs">33</text>
<text x="545.600" y="674.300" textLength="11.700" lengthAdjust="spacingAndGlyphs">40</text>
</g>

<!-- right side: canal, road -->
<rect x="880" y="70" width="66" height="73" fill="#fff"/><rect x="1023" y="623" width="67" height="5" fill="#fff"/><rect x="880" y="656" width="66" height="72" fill="#fff"/>
<g fill="none" stroke="#b84c9c" stroke-width="1">
<path d="M880.500 109.500H878.500V677.500H881.500M942.500 109.500H947V677.500H943.500"/>
</g>
<g fill="none" stroke="#000" stroke-width="1">
<path d="M961.500 83.500V723.500M1119.500 84.500V717.500"/>
<path d="M907.5 310V512M1042.5 547V677.5"/>
<path d="M975.500 177V218"/>
<path d="M975.500 168.500L972 180.500L975.500 177.500L979 180.500Z" fill="#fff"/>
<path d="M972.500 233.500V221.500L975.500 217L979 221.500V233.500L975.500 228.500Z" fill="#fff"/>
<rect x="832.5" y="352.5" width="27.5" height="40.5"/>
<path d="M849.5 364.5H899M849.5 377.5H899"/>
<path d="M1000.5 337L844 357.6"/>
<path d="M984 433.5H1000"/>
</g>
<g fill="#000">
<path d="M907.5 309l-2.6 9 2.6-2.4 2.6 2.4z"/>
<path d="M1042.5 546l-2.6 9 2.6-2.4 2.6 2.4z"/>
<path d="M843.5 357.7l8.5-3.8-1.9 2.9 2.6 2.3z"/>
<path d="M1004.5 433.5l-9-2.6 2.4 2.6-2.4 2.6z"/>
<path d="M517.5 555l3.4-8 .6 3.3 3.3.6z"/>
<path d="M673.500 587l-2.400 8 2.400-2 2.400 2z"/>
</g>
<g fill="none" stroke="#000" stroke-width="1">
<path d="M562.5 515L518 554.5"/>
<path d="M657 606.500H673.500V592"/>
<rect x="974.5" y="401.5" width="5" height="65" stroke="#444" stroke-dasharray="7 2 2 2"/>
</g>
<g font-family="Liberation Sans, sans-serif">
<text x="314.7" y="248.8" font-size="11.2" fill="#12303f" textLength="28.7" lengthAdjust="spacingAndGlyphs">BATH</text>
<text x="313.0" y="258.8" font-size="9.8" fill="#12303f" textLength="30.8" lengthAdjust="spacingAndGlyphs">6 x 6-4</text>
<text x="299.5" y="346.0" font-size="11.2" fill="#12303f" textLength="57.5" lengthAdjust="spacingAndGlyphs">DRESSING</text>
<text x="313.0" y="355.6" font-size="9.8" fill="#12303f" textLength="30.8" lengthAdjust="spacingAndGlyphs">6 x 3-6</text>
<text x="462.8" y="304.8" font-size="11.2" fill="#12303f" textLength="39.5" lengthAdjust="spacingAndGlyphs">LIVING</text>
<text x="460.3" y="315.0" font-size="9.8" fill="#12303f" textLength="46.2" lengthAdjust="spacingAndGlyphs">12 x 1 0-3</text>
<text x="610.3" y="324.0" font-size="11.2" fill="#12303f" textLength="35.0" lengthAdjust="spacingAndGlyphs">ENTRY</text>
<text x="603.3" y="333.6" font-size="9.8" fill="#12303f" textLength="50.7" lengthAdjust="spacingAndGlyphs">8-8 x 1 0-3</text>
<text x="675.0" y="250.0" font-size="11.2" fill="#12303f" textLength="29.5" lengthAdjust="spacingAndGlyphs">Pooja</text>
<text x="680.3" y="260.0" font-size="9.8" fill="#12303f" textLength="21.7" lengthAdjust="spacingAndGlyphs">4 x 4</text>
<text x="780.8" y="266.3" font-size="11.2" fill="#12303f" textLength="30.8" lengthAdjust="spacingAndGlyphs">SUMP</text>
<text x="786.7" y="278.5" font-size="11.2" fill="#12303f" textLength="17.5" lengthAdjust="spacingAndGlyphs">5x5</text>
<text x="347.5" y="480.6" font-size="11.2" fill="#12303f" textLength="55.0" lengthAdjust="spacingAndGlyphs">BEDROOM</text>
<text x="360.5" y="490.6" font-size="9.8" fill="#12303f" textLength="31.5" lengthAdjust="spacingAndGlyphs">12 x 11</text>
<text x="569.5" y="457.0" font-size="11.2" fill="#12303f" textLength="41.5" lengthAdjust="spacingAndGlyphs">DINING</text>
<text x="561.0" y="467.0" font-size="9.8" fill="#12303f" textLength="58.0" lengthAdjust="spacingAndGlyphs">1 0-9 x 1 2-5</text>
<text x="699.5" y="481.0" font-size="11.2" fill="#12303f" textLength="47.5" lengthAdjust="spacingAndGlyphs">KITCHEN</text>
<text x="710.5" y="490.6" font-size="9.8" fill="#12303f" textLength="26.5" lengthAdjust="spacingAndGlyphs">8 x 11</text>
<text x="562.5" y="510.0" font-size="11.2" fill="#2a6b2a" textLength="57.5" lengthAdjust="spacingAndGlyphs">Hand Wash</text>
<text x="562.5" y="522.5" font-size="11.2" fill="#2a6b2a" textLength="58.0" lengthAdjust="spacingAndGlyphs">below stairs</text>
<text x="598.0" y="608.8" font-size="11.2" fill="#2a6b2a" textLength="55.0" lengthAdjust="spacingAndGlyphs">Water Tap</text>
<text x="499.0" y="656.8" font-size="11.2" fill="#12303f" textLength="72.4" lengthAdjust="spacingAndGlyphs">LIVING AREA</text>
<text x="513.0" y="667.0" font-size="9.8" fill="#12303f" textLength="43.5" lengthAdjust="spacingAndGlyphs">68.6 sq m</text>
<text x="1003.7" y="328.0" font-size="11.2" fill="#12303f" textLength="107.3" lengthAdjust="spacingAndGlyphs">Inspection chamber</text>
<text x="1003.7" y="340.6" font-size="11.2" fill="#12303f" textLength="94.8" lengthAdjust="spacingAndGlyphs">connecting out to</text>
<text x="1003.7" y="352.6" font-size="11.2" fill="#12303f" textLength="100.3" lengthAdjust="spacingAndGlyphs">the drainage canal</text>
<text x="1010.4" y="430.8" font-size="11.2" fill="#12303f" textLength="85.9" lengthAdjust="spacingAndGlyphs">Dotted lines are</text>
<text x="1012.0" y="443.0" font-size="11.2" fill="#12303f" textLength="91.5" lengthAdjust="spacingAndGlyphs">virtual walls only</text>
<text x="972.0" y="155.7" font-size="16" fill="#222" textLength="8.7" lengthAdjust="spacingAndGlyphs">N</text>
<text transform="translate(909.5 531.7) rotate(90)" font-size="12" fill="#12303f" textLength="68.8" lengthAdjust="spacingAndGlyphs">Underground</text>
<text transform="translate(897.5 531.7) rotate(90)" font-size="12" fill="#12303f" textLength="80.1" lengthAdjust="spacingAndGlyphs">Drainage canal</text>
<text transform="translate(1006.4 573.5) rotate(90)" font-size="15.5" fill="#12303f" textLength="40.5" lengthAdjust="spacingAndGlyphs">ROAD</text>
<text transform="translate(1065.4 548.8) rotate(90)" font-size="15.5" fill="#12303f" textLength="40.5" lengthAdjust="spacingAndGlyphs">ROAD</text>
<text x="498.5" y="523.0" font-size="9.8" fill="#1a1a1a" textLength="13.5" lengthAdjust="spacingAndGlyphs">UP</text>
<text x="587.5" y="561.5" font-size="9.8" fill="#1a1a1a" textLength="13.5" lengthAdjust="spacingAndGlyphs">UP</text>
<text x="780.0" y="345.0" font-size="9.8" fill="#1a1a1a" textLength="12.0" lengthAdjust="spacingAndGlyphs">UP</text>
<text x="423.0" y="193.0" font-size="7.2" fill="#0c2c3c" textLength="49.0" lengthAdjust="spacingAndGlyphs">900x1 200DH</text>
<text x="523.5" y="193.0" font-size="7.2" fill="#0c2c3c" textLength="49.0" lengthAdjust="spacingAndGlyphs">900x1 200DH</text>
<text x="351.5" y="582.5" font-size="7.2" fill="#0c2c3c" textLength="48.0" lengthAdjust="spacingAndGlyphs">900x1 200DH</text>
<text x="288.0" y="320.0" font-size="7.6" fill="#0c2c3c" textLength="39.2" lengthAdjust="spacingAndGlyphs">800x2 100</text>
<text transform="translate(265.1 263.5) rotate(-90)" font-size="7.2" fill="#0c2c3c" textLength="50.5" lengthAdjust="spacingAndGlyphs">900x1 200DH</text>
<text transform="translate(265.1 435.0) rotate(-90)" font-size="7.2" fill="#0c2c3c" textLength="49.0" lengthAdjust="spacingAndGlyphs">900x1 200DH</text>
<text transform="translate(748.1 268.5) rotate(-90)" font-size="7.2" fill="#0c2c3c" textLength="50.0" lengthAdjust="spacingAndGlyphs">900x1 200DH</text>
<text transform="translate(812.0 495.5) rotate(-90)" font-size="7.2" fill="#0c2c3c" textLength="50.5" lengthAdjust="spacingAndGlyphs">900x1 200DH</text>
<text transform="translate(481.6 429.0) rotate(-90)" font-size="7.2" fill="#0c2c3c" textLength="39.0" lengthAdjust="spacingAndGlyphs">800x2 100</text>
<text transform="translate(652.3 211.5) rotate(90)" font-size="7.4" fill="#0c2c3c" textLength="31.0" lengthAdjust="spacingAndGlyphs">100x2 100</text>
<text transform="translate(652.3 243.5) rotate(90)" font-size="7.4" fill="#0c2c3c" textLength="31.5" lengthAdjust="spacingAndGlyphs">450x2 100</text>
</g>

</svg>
</div>
<div id="vscroll" class="abs"><svg class="abs" style="left:0;top:0" width="17" height="658" viewBox="1233 70 17 658"><rect x="1233" y="70" width="17" height="658" fill="#f0f0f0"/><path d="M1236.500 81.500H1244.500L1240.500 77Z M1236.500 716.500H1244.500L1240.500 721Z" fill="#3c3c3c"/><defs><linearGradient id="vth" x1="0" y1="0" x2="1" y2="0"><stop offset="0" stop-color="#f8f8f8"/><stop offset="1" stop-color="#c8c8c8"/></linearGradient></defs><rect x="1234" y="392.500" width="14" height="14" rx="2" fill="url(#vth)" stroke="#a4a4a4"/></svg></div>
<div id="hscroll" class="abs"><svg class="abs" style="left:0;top:0" width="1205" height="17" viewBox="45 728 1205 17"><rect x="47" y="728" width="1205" height="17" fill="#f0f0f0"/><path d="M57.500 732.500V740.500L53 736.500Z M1221.500 732.500V740.500L1226 736.500Z" fill="#3c3c3c"/><defs><linearGradient id="hth" x1="0" y1="0" x2="0" y2="1"><stop offset="0" stop-color="#f8f8f8"/><stop offset="1" stop-color="#c8c8c8"/></linearGradient></defs><rect x="632.500" y="729.500" width="14" height="14" rx="2" fill="url(#hth)" stroke="#a4a4a4"/></svg></div>
<div id="righttb" class="abs"><svg class="abs" style="left:-1px;top:0" width="31" height="675" viewBox="1249 70 31 675" font-family="Liberation Sans, sans-serif">
<defs><linearGradient id="rg" x1="0" y1="0" x2="1" y2="1"><stop offset="0" stop-color="#f8fafc"/><stop offset="1" stop-color="#9cacbc"/></linearGradient><radialGradient id="rl" cx=".35" cy=".35" r=".7"><stop offset="0" stop-color="#fff"/><stop offset="1" stop-color="#a8b8cc"/></radialGradient><linearGradient id="rb" x1="0" y1="0" x2="0" y2="1"><stop offset="0" stop-color="#8c9cb8"/><stop offset="1" stop-color="#e4ecf4"/></linearGradient><linearGradient id="rb2" x1="0" y1="0" x2="1" y2="1"><stop offset="0" stop-color="#b4c4d8"/><stop offset=".6" stop-color="#f0f4f8"/><stop offset="1" stop-color="#dce4ec"/></linearGradient></defs>
<path d="M1249.500 70V743.500H1280M1250 112.500H1280M1250 70.500H1280" stroke="#b0b0b0" fill="none"/>
<path d="M1254 118.500H1275M1254 121.500H1275" stroke="#b8b8b8" fill="none"/><path d="M1254 119.500H1275M1254 122.500H1275" stroke="#fff" fill="none"/>
<path d="M1254 391.500H1275M1254 394.500H1275" stroke="#b8b8b8" fill="none"/><path d="M1254 392.500H1275M1254 395.500H1275" stroke="#fff" fill="none"/>
<rect x="1259.500" y="136.500" width="13" height="13" fill="#fff" stroke="#3c4c64" stroke-width="1"/>
<path d="M1268 145L1273.500 152" stroke="#b08c4c" stroke-width="3"/><path d="M1268 145L1273.500 152" stroke="#5c4414" stroke-width=".8"/><circle cx="1262.500" cy="140" r="7" fill="url(#rl)" stroke="#14243c" stroke-width="1.300"/>
<path d="M1268 170L1273.500 177" stroke="#b08c4c" stroke-width="3"/><path d="M1268 170L1273.500 177" stroke="#5c4414" stroke-width=".8"/><circle cx="1262.500" cy="165" r="7" fill="url(#rl)" stroke="#14243c" stroke-width="1.300"/><path d="M1258.500 165H1266.500M1262.500 161V169" stroke="#14244c" stroke-width="2.600"/>
<path d="M1268 196L1273.500 203" stroke="#b08c4c" stroke-width="3"/><path d="M1268 196L1273.500 203" stroke="#5c4414" stroke-width=".8"/><circle cx="1262.500" cy="191" r="7" fill="url(#rl)" stroke="#14243c" stroke-width="1.300"/><path d="M1258.500 191H1266.500" stroke="#14244c" stroke-width="2.600"/>
<rect x="1258.500" y="208.500" width="15" height="15" fill="url(#rg)" stroke="#3c4c64" stroke-width="1"/><rect x="1254.500" y="223.500" width="5" height="5" fill="#fff" stroke="#000" stroke-width="1.200"/><path d="M1269.500 213L1264 218.500" stroke="#000" stroke-width="1.500"/><path d="M1262.500 220L1263.500 215.500L1267 219Z" fill="#000"/>
<rect x="1255.500" y="235.0" width="19" height="19" fill="url(#rb2)" stroke="#14243c" stroke-width="1.200"/><path d="M1262 241.5L1258.5 238.0" stroke="#2c4c7c" stroke-width="1.300"/><path d="M1258.5 238.0L1262.0 238.0L1258.5 241.5Z" fill="#2c4c7c"/><path d="M1268 241.5L1271.5 238.0" stroke="#2c4c7c" stroke-width="1.300"/><path d="M1271.5 238.0L1268.0 238.0L1271.5 241.5Z" fill="#2c4c7c"/><path d="M1262 247.5L1258.5 251.0" stroke="#2c4c7c" stroke-width="1.300"/><path d="M1258.5 251.0L1262.0 251.0L1258.5 247.5Z" fill="#2c4c7c"/><path d="M1268 247.5L1271.5 251.0" stroke="#2c4c7c" stroke-width="1.300"/><path d="M1271.5 251.0L1268.0 251.0L1271.5 247.5Z" fill="#2c4c7c"/><rect x="1262.500" y="242.0" width="5" height="5" fill="#fff" stroke="#000" stroke-width="1"/>
<rect x="1255.500" y="261.0" width="19" height="19" fill="url(#rb2)" stroke="#14243c" stroke-width="1.200"/><path d="M1262 267.5L1258.5 264.0" stroke="#2c4c7c" stroke-width="1.300"/><path d="M1258.5 264.0L1262.0 264.0L1258.5 267.5Z" fill="#2c4c7c"/><path d="M1268 267.5L1271.5 264.0" stroke="#2c4c7c" stroke-width="1.300"/><path d="M1271.5 264.0L1268.0 264.0L1271.5 267.5Z" fill="#2c4c7c"/><path d="M1262 273.5L1258.5 277.0" stroke="#2c4c7c" stroke-width="1.300"/><path d="M1258.5 277.0L1262.0 277.0L1258.5 273.5Z" fill="#2c4c7c"/><path d="M1268 273.5L1271.5 277.0" stroke="#2c4c7c" stroke-width="1.300"/><path d="M1271.5 277.0L1268.0 277.0L1271.5 273.5Z" fill="#2c4c7c"/>
<rect x="1255.500" y="287.500" width="19" height="19" fill="url(#rb)" stroke="#14243c" stroke-width="1.200"/><path d="M1260.500 298L1259 294.500Q1260 293 1261.500 294.500L1262.500 296V291.500Q1263.500 290 1264.500 291.500V290.500Q1265.500 289 1266.500 290.500V291.500Q1267.500 290 1268.500 291.500V293Q1269.500 292 1270.500 293.500V299Q1270.500 303 1267 303.500H1264Q1262 303 1260.500 298Z" fill="#fff" stroke="#000" stroke-width=".9"/>
<path d="M1255 331L1261 327H1275L1269 331Z" fill="#14203c" stroke="#000" stroke-width=".8"/><path d="M1255 327L1261 323H1275L1269 327Z" fill="#5c6c8c" stroke="#000" stroke-width=".8"/><path d="M1255 322.500L1261 318.500H1275L1269 322.500Z" fill="#a8b8cc" stroke="#000" stroke-width=".8"/><path d="M1255 318.500L1261 314.500H1275L1269 318.500Z" fill="#f0f4f8" stroke="#000" stroke-width=".8"/>
<path d="M1256 343.500L1264 339.500H1275.500L1267.500 343.500Z" fill="#8c9cb4" stroke="#14243c" stroke-width=".8"/><path d="M1256 353.500L1264 349.500H1275.500L1267.500 353.500Z" fill="#2c3c5c" stroke="#14243c" stroke-width=".8"/><path d="M1262 346.500Q1256 348 1259 352.500" fill="none" stroke="#3c6c9c" stroke-width="2"/><path d="M1257 351.500L1261.500 354.500L1261 350Z" fill="#3c6c9c"/><path d="M1259.500 339.500L1262.500 336L1265 340" fill="none" stroke="#3c6c9c" stroke-width="1.600"/>
<rect x="1255.500" y="367.500" width="13" height="15" fill="#ececec" stroke="#b4b4b4" stroke-width="1.200"/><rect x="1259.500" y="364.500" width="13" height="15" fill="#f4f4f4" stroke="#b4b4b4" stroke-width="1.200"/><path d="M1263 376.500Q1263 371 1268.500 372.500" fill="none" stroke="#b8b8b8" stroke-width="2"/><path d="M1260.500 375L1263 379L1265.500 375Z" fill="#b8b8b8"/>
<path d="M1254.500 412L1265 403L1275.500 412Z" fill="#3c2c1c" stroke="#000" stroke-width="1"/><rect x="1257" y="412" width="16" height="10" fill="#e8dcb8" stroke="#000" stroke-width="1.200"/><rect x="1262.500" y="414" width="4.500" height="8" fill="#000"/><rect x="1258.500" y="414" width="3" height="4.500" fill="#5c3c1c"/><rect x="1268.500" y="414" width="3" height="4.500" fill="#fff" stroke="#000" stroke-width=".6"/>
<rect x="1252.500" y="427.0" width="26" height="25" rx="3.500" fill="#dcdcdc" stroke="#7c7c7c" stroke-width="1.200"/>
<rect x="1257" y="431" width="17" height="3.200" fill="#000"/><rect x="1257" y="446" width="17" height="2.500" fill="#a8b4c8"/><path d="M1259.500 441Q1261 436.500 1264.500 438M1271 438.500Q1270 443 1266 441.500" fill="none" stroke="#2c4c8c" stroke-width="1.800"/><path d="M1258 439.500L1259.500 443.500L1262 440Z M1272.500 440L1271 436L1268.500 439.500Z" fill="#2c4c8c"/>
<rect x="1257.500" y="457.500" width="16" height="18" fill="#fff" stroke="#14243c" stroke-width="1.600"/><rect x="1260" y="460" width="11" height="13" fill="url(#rg)"/>
<path d="M1257.500 482.500H1266L1270.500 487V501.500H1257.500Z" fill="#fff" stroke="#14243c" stroke-width="1.200"/><path d="M1266 482.500V487H1270.500" fill="none" stroke="#14243c" stroke-width=".9"/><path d="M1270.500 499L1275 503.500" stroke="#a8843c" stroke-width="2.600"/><circle cx="1267.500" cy="496" r="3.800" fill="#dce8f4" stroke="#14243c" stroke-width="1.100"/>
<rect x="1252.500" y="505.5" width="26" height="25" rx="3.500" fill="#dcdcdc" stroke="#7c7c7c" stroke-width="1.200"/>
<text x="1255.500" y="524" font-size="17" fill="#1c3c6c" font-family="Liberation Sans, sans-serif">T</text><path d="M1259.500 527.500L1275 510" stroke="#000" stroke-width="1.200"/><path d="M1276 509L1274.800 514L1271.300 510.800Z M1258.800 528.500L1260 523.500L1263.500 526.700Z" fill="#000"/>
<path d="M1256 535.500H1274" stroke="#5c7ca4" stroke-width="1.200"/><path d="M1256.500 541V554.500H1273.500V541" fill="none" stroke="#5c7ca4" stroke-width="1.200"/><path d="M1265 551V543" stroke="#2c4c7c" stroke-width="1.300"/><path d="M1265 541L1262 546H1268Z" fill="#2c4c7c"/>
<path d="M1259 577.500Q1267.500 576.500 1268.500 566M1261 582Q1272.500 580 1273.500 567" fill="none" stroke="#2c4c7c" stroke-width="1.500"/><path d="M1258.500 563V567M1256.500 565H1260.500M1263.500 569.500V572.500M1262 571H1265" stroke="#2c4c7c" stroke-width="1"/>
<rect x="1252.500" y="584.0" width="26" height="25" rx="3.500" fill="#dcdcdc" stroke="#7c7c7c" stroke-width="1.200"/>
<rect x="1256.500" y="588" width="18" height="18" fill="#c8d4e8" stroke="#2c4474" stroke-width="1"/><path d="M1262.500 588V606M1268.500 588V606M1256.500 594H1274.500M1256.500 600H1274.500" stroke="#2c4474" stroke-width="1.100"/>
<rect x="1252.500" y="610.0" width="26" height="25" rx="3.500" fill="#dcdcdc" stroke="#7c7c7c" stroke-width="1.200"/>
<rect x="1256.500" y="613.500" width="18" height="18" fill="#f0f0f0" stroke="#000" stroke-width="1.100"/><path d="M1262.500 613.500V631.500M1268.500 613.500V631.500M1256.500 619.500H1274.500M1256.500 625.500H1274.500" stroke="#000" stroke-width="1.100"/><circle cx="1265.500" cy="622.500" r="3.800" fill="none" stroke="#b42c1c" stroke-width="1.300"/><path d="M1259.500 622.500H1271.500M1265.500 616.500V628.500" stroke="#b42c1c" stroke-width="1.100"/>
<rect x="1252.500" y="636.0" width="26" height="25" rx="3.500" fill="#dcdcdc" stroke="#7c7c7c" stroke-width="1.200"/>
<rect x="1258.500" y="643.500" width="13" height="13" fill="#fff" stroke="#000" stroke-width="1.300"/><circle cx="1271" cy="643.500" r="4.600" fill="#f0f0f0" stroke="#000" stroke-width="1.100"/><circle cx="1271" cy="643.500" r="1.600" fill="#000"/><rect x="1256.500" y="654.500" width="4" height="4" fill="#000"/><rect x="1269.500" y="654.500" width="4" height="4" fill="#000"/><rect x="1256.500" y="641.500" width="4" height="4" fill="#000"/>
<rect x="1252.500" y="662.0" width="26" height="25" rx="3.500" fill="#dcdcdc" stroke="#7c7c7c" stroke-width="1.200"/>
<rect x="1256.500" y="665.500" width="18" height="18" fill="#f4e4e0" stroke="#5c2c2c" stroke-width=".8"/><path d="M1257 683L1263 666M1257 683L1269.500 666M1257 683L1274 670M1257 683L1274 677" stroke="#b43c2c" stroke-width="1" stroke-dasharray="2 1.200"/>
</svg>
</div>
<div id="status" class="abs"><svg class="abs" style="left:0;top:-1px" width="1280" height="26" viewBox="0 744 1280 26" font-family="Liberation Sans, sans-serif" font-size="12.500" fill="#000">
<rect x="0" y="744" width="1280" height="26" fill="#f0f0f0"/>
<path d="M0 745.500H1280" stroke="#8c8c8c" fill="none"/><path d="M0 747.500H1280" stroke="#c0c0c0" fill="none"/><path d="M0 746.500H1280" stroke="#fff" fill="none"/>
<path d="M596.500 750V768M772.500 750V768M850.500 750V768M1052.500 750V768" stroke="#d4d4d4" fill="none"/><path d="M597.500 750V768M773.500 750V768M851.500 750V768M1053.500 750V768" stroke="#fff" fill="none"/>
<text x="601" y="763.500" textLength="25.500" lengthAdjust="spacingAndGlyphs">2 0-6</text>
<text x="648" y="763.500" textLength="50" lengthAdjust="spacingAndGlyphs">245.69447</text>
<text x="779" y="763.500" textLength="37" lengthAdjust="spacingAndGlyphs">Floor: 1</text>
<text x="856" y="763.500" textLength="175.500" lengthAdjust="spacingAndGlyphs" xml:space="preserve">CAD Layer:  DEFAULT CAD LAYER</text>
<text x="1057.500" y="763.500" textLength="191" lengthAdjust="spacingAndGlyphs">X: 32878 mm, Y: 13687 mm, Z: 0 mm</text>
</svg>
</div>
<div id="taskbar" class="abs"><svg class="abs" style="left:0;top:-6px;overflow:visible" width="1280" height="36" viewBox="0 764 1280 36" font-family="Liberation Sans, sans-serif">
<defs>
<radialGradient id="orb" cx=".5" cy=".35" r=".75"><stop offset="0" stop-color="#9cd0f0"/><stop offset=".45" stop-color="#2c6cb0"/><stop offset=".8" stop-color="#143c74"/><stop offset="1" stop-color="#0c1c3c"/></radialGradient>
<linearGradient id="tbtn" x1="0" y1="0" x2="0" y2="1"><stop offset="0" stop-color="#34363a"/><stop offset=".45" stop-color="#1c1d20"/><stop offset=".5" stop-color="#000"/><stop offset="1" stop-color="#08080a"/></linearGradient>
<linearGradient id="gx2" x1="0" y1="0" x2="0" y2="1"><stop offset="0" stop-color="#9cbc6c"/><stop offset="1" stop-color="#3c6c1c"/></linearGradient>
<radialGradient id="smile" cx=".4" cy=".35" r=".7"><stop offset="0" stop-color="#fff4a0"/><stop offset="1" stop-color="#f0a818"/></radialGradient>
</defs>
<!-- orb -->
<circle cx="30.500" cy="785.500" r="21" fill="#0c1c34" opacity=".9"/><circle cx="30.500" cy="785.500" r="19.500" fill="url(#orb)" stroke="#84b4dc" stroke-width="1.200"/>
<path d="M9.500 785.500A21 21 0 0 1 51.500 785.500Q30 777 9.500 785.500Z" fill="#fff" opacity=".22"/>
<path d="M20.500 775.500Q25 773 29.500 775.500L28 784Q24 782 19 784Z" fill="#e8602c"/><path d="M31.500 776.500Q36 778.500 41.500 775.500L40 783.500Q35 786 30 784.300Z" fill="#8cc43c"/><path d="M18.500 786.500Q23.500 784.500 27.500 786.500L26 795Q22 793 17.500 795Z" fill="#3ca0e8"/><path d="M29.500 787Q34.500 789 39.500 786.500L38 794.500Q33 797 28 795.500Z" fill="#f8c82c"/>
<!-- quick launch -->
<rect x="64.500" y="778.500" width="16" height="12" fill="#4c7cc4" stroke="#c8d4e4" stroke-width="1.200"/><rect x="66" y="780" width="13" height="7" fill="#3468b8"/><path d="M66 789.500H72" stroke="#e8ecf4" stroke-width="1.200"/>
<rect x="87.500" y="777.500" width="16" height="14" fill="#2c58a8" stroke="#dce4f0" stroke-width="1.200"/><rect x="89.500" y="780" width="7" height="5" fill="#fff" stroke="#14306c" stroke-width=".8"/><rect x="93.500" y="784" width="8" height="5.500" fill="#e8ecf4" stroke="#14306c" stroke-width=".8"/>
<circle cx="119" cy="785" r="6.500" fill="none" stroke="#3c9ce4" stroke-width="3.200"/><path d="M114 785.500H125" stroke="#3c9ce4" stroke-width="2.400"/><path d="M121 789H127" stroke="#000" stroke-width="3"/><path d="M110.500 791Q114 776 127.500 777.500" fill="none" stroke="#f4c83c" stroke-width="1.600"/>
<circle cx="141.500" cy="784.500" r="7.800" fill="url(#smile)" stroke="#a85c0c" stroke-width=".9"/><path d="M136.500 785.500Q141.500 793 146.500 785.500Z" fill="#fff" stroke="#7c2c0c" stroke-width=".9"/><path d="M139 780V783M144 780V783" stroke="#3c1c0c" stroke-width="1.500"/><path d="M138 790.500Q141.500 793.500 145 790.500" stroke="#c4280c" stroke-width="1.500" fill="none"/>
<!-- task button -->
<rect x="161" y="772" width="158" height="26" rx="3.500" fill="none" stroke="#7c7e80" stroke-width="1"/><rect x="162" y="773" width="156" height="24.500" rx="3" fill="url(#tbtn)" stroke="#000" stroke-width="1"/>
<rect x="171" y="777" width="15.500" height="15.500" fill="url(#gx2)"/><path d="M171 792.500V784Q178 778 186.500 792.500Z" fill="#2c5c14" opacity=".5"/><path d="M171 777L186.500 792.500" stroke="#d4e4b8" stroke-width=".8"/>
<text x="173.500" y="791" font-size="7.500" font-weight="bold" fill="#fff">X2</text>
<text x="191" y="790" font-size="12.800" fill="#fff" textLength="114" lengthAdjust="spacingAndGlyphs">Chief Architect X2 T...</text>
<!-- tray -->
<path d="M1123.500 780.500L1119.500 784.500L1123.500 788.500" fill="none" stroke="#fff" stroke-width="1.800"/>
<rect x="1132.500" y="777" width="15" height="15" fill="#c4143c"/><path d="M1137 789Q1134.500 783 1141.500 779.500Q1146 781 1143.500 787Q1140.500 791.500 1137 789Z" fill="none" stroke="#fff" stroke-width="1.700"/>
<rect x="1162.500" y="779.500" width="9" height="13" rx="1.500" fill="#1c3c24" stroke="#e4ece4" stroke-width="1.300"/><rect x="1165" y="777.500" width="4" height="2" fill="#e4ece4"/><rect x="1164.500" y="785.500" width="5" height="5.500" fill="#b4ecb4"/>
<rect x="1180.500" y="777.500" width="11" height="8.500" fill="#1c1c1c" stroke="#f0f0f0" stroke-width="1.300"/><rect x="1177.500" y="781.500" width="11" height="8.500" fill="#2c2c2c" stroke="#f0f0f0" stroke-width="1.300"/><path d="M1180 792.500H1186" stroke="#f0f0f0" stroke-width="1.300"/><path d="M1186.500 786.500L1192.500 792.500M1192.500 786.500L1186.500 792.500" stroke="#e4241c" stroke-width="2.200"/>
<path d="M1196.500 782H1199L1203 778V791L1199 787H1196.500Z" fill="#f0f0f0"/><path d="M1205.500 781.500Q1207.500 784.500 1205.500 787.500M1208 779.500Q1211 784.500 1208 789.500" fill="none" stroke="#5cc45c" stroke-width="1.300"/>
<text x="1218.500" y="789.500" font-size="12.800" fill="#fff" textLength="46.500" lengthAdjust="spacingAndGlyphs">PM 03:25</text>
</svg>
</div>
<div id="frame" class="abs"></div>
</body>
</html>
